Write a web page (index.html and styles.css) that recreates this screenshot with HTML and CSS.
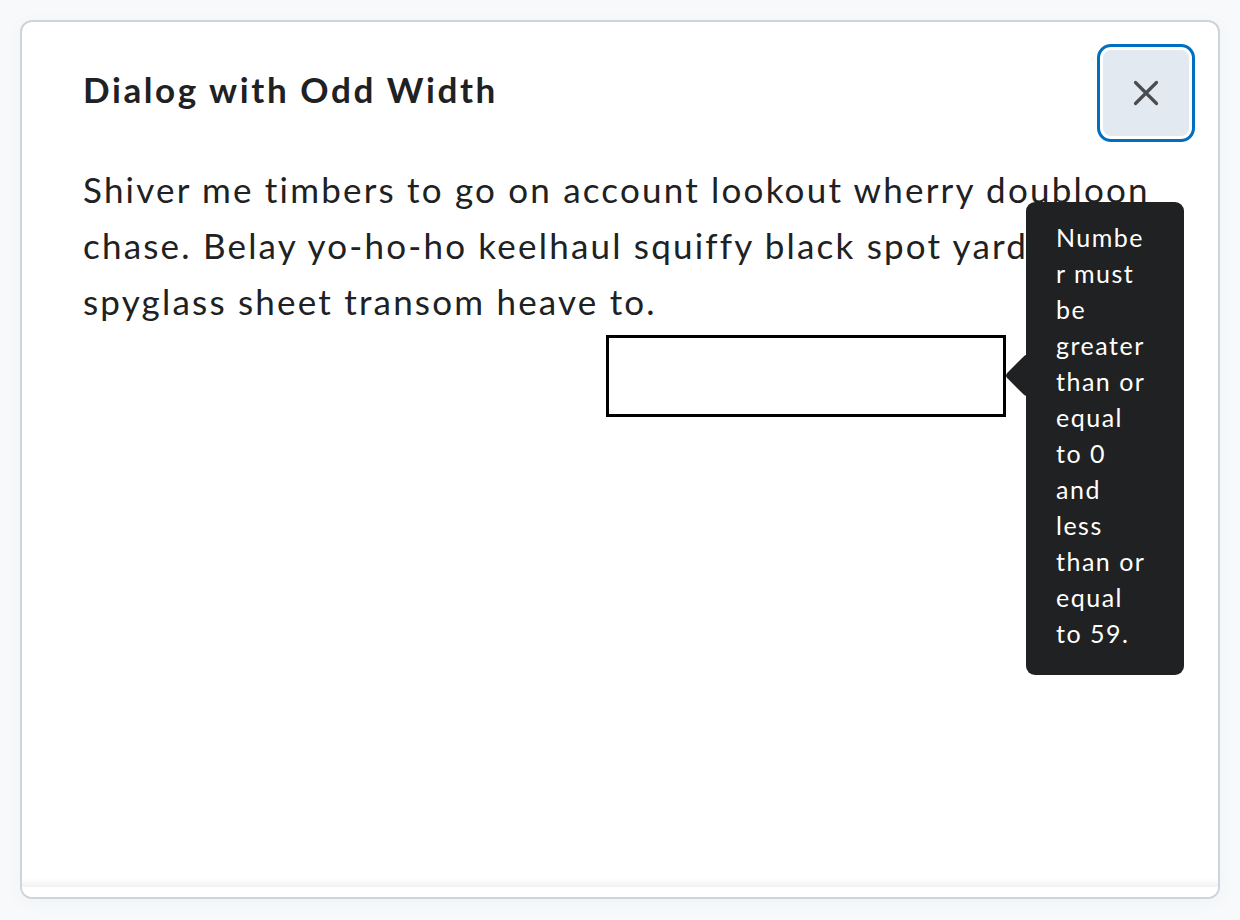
FILE: index.html
```html
<!DOCTYPE html>
<html>
<head>
<meta charset="utf-8">
<link rel="stylesheet" href="styles.css">
</head>
<body>
<div class="dialog">
  <div class="header">
    <h2 class="title">Dialog with Odd Width</h2>
    <button class="close" aria-label="Close">
      <svg width="26" height="26" viewBox="0 0 26 26"><path d="M2.5 2.5 L23.5 23.5 M23.5 2.5 L2.5 23.5" stroke="#494c4e" stroke-width="3.2" stroke-linecap="round" fill="none"/></svg>
    </button>
  </div>
  <div class="content">
    <p class="text">Shiver me timbers to go on account lookout wherry doubloon chase. Belay yo-ho-ho keelhaul squiffy black spot yardarm spyglass sheet transom heave to.</p>
    <div class="field">
      <div class="input"></div>
      <div class="tooltip">Numbe<br>r must<br>be<br>greater<br>than or<br>equal<br>to 0<br>and<br>less<br>than or<br>equal<br>to 59.</div>
    </div>
  </div>
  <div class="scroll-shadow"></div>
  <div class="footer"></div>
</div>
</body>
</html>
```

FILE: styles.css
```css
html, body {
  margin: 0;
  padding: 0;
}
body {
  background: #f8f9fb;
  font-family: Lato, "Noto Sans", sans-serif;
  font-variant-ligatures: none;
  color: #202122;
  width: 1240px;
  height: 920px;
  overflow: hidden;
}
.dialog {
  position: relative;
  margin: 20px 0 0 20px;
  width: 1200px;
  height: 879px;
  box-sizing: border-box;
  background: #fff;
  border: 2px solid #cdd5dc;
  border-radius: 12px;
  box-shadow: 0 4px 20px rgba(0, 0, 0, 0.03);
  display: flex;
  flex-direction: column;
  overflow: hidden;
}
.header {
  display: flex;
  justify-content: space-between;
  align-items: flex-start;
  padding: 22px 22px 0 61px;
}
.title {
  margin: 0;
  padding-top: 24px;
  font-size: 35px;
  font-weight: 700;
  letter-spacing: 2.6px;
  line-height: 42px;
  color: #202122;
}
.close {
  width: 98px;
  height: 98px;
  box-sizing: border-box;
  border-radius: 14px;
  border: 3px solid #006fbf;
  background: #e3e9f1;
  box-shadow: inset 0 0 0 3px #fff;
  display: flex;
  align-items: center;
  justify-content: center;
  padding: 0;
  margin-right: 1px;
}
.content {
  flex: 1;
  padding: 19px 60px 0 61px;
}
.text {
  margin: 0;
  font-size: 35px;
  letter-spacing: 2.2px;
  line-height: 56px;
  color: #202122;
}
.field {
  position: relative;
  margin: 6px 0 0 523px;
  width: 400px;
}
.input {
  width: 400px;
  height: 82px;
  box-sizing: border-box;
  border: 3px solid #000;
}
.tooltip {
  position: absolute;
  left: 420px;
  top: -133px;
  width: 158px;
  height: 473px;
  box-sizing: border-box;
  padding: 17px 6px 0 30px;
  background: #202122;
  color: #fff;
  border-radius: 9px;
  font-size: 25px;
  letter-spacing: 1.5px;
  line-height: 36px;
  white-space: nowrap;
}
.tooltip::before {
  content: "";
  position: absolute;
  left: -15px;
  top: 158px;
  width: 31px;
  height: 31px;
  background: #202122;
  transform: rotate(45deg);
  border-radius: 4px;
}
.scroll-shadow {
  height: 9px;
  background: linear-gradient(to bottom, rgba(0, 0, 0, 0), rgba(0, 0, 0, 0.055));
}
.footer {
  height: 10px;
  background: #fff;
}
```
